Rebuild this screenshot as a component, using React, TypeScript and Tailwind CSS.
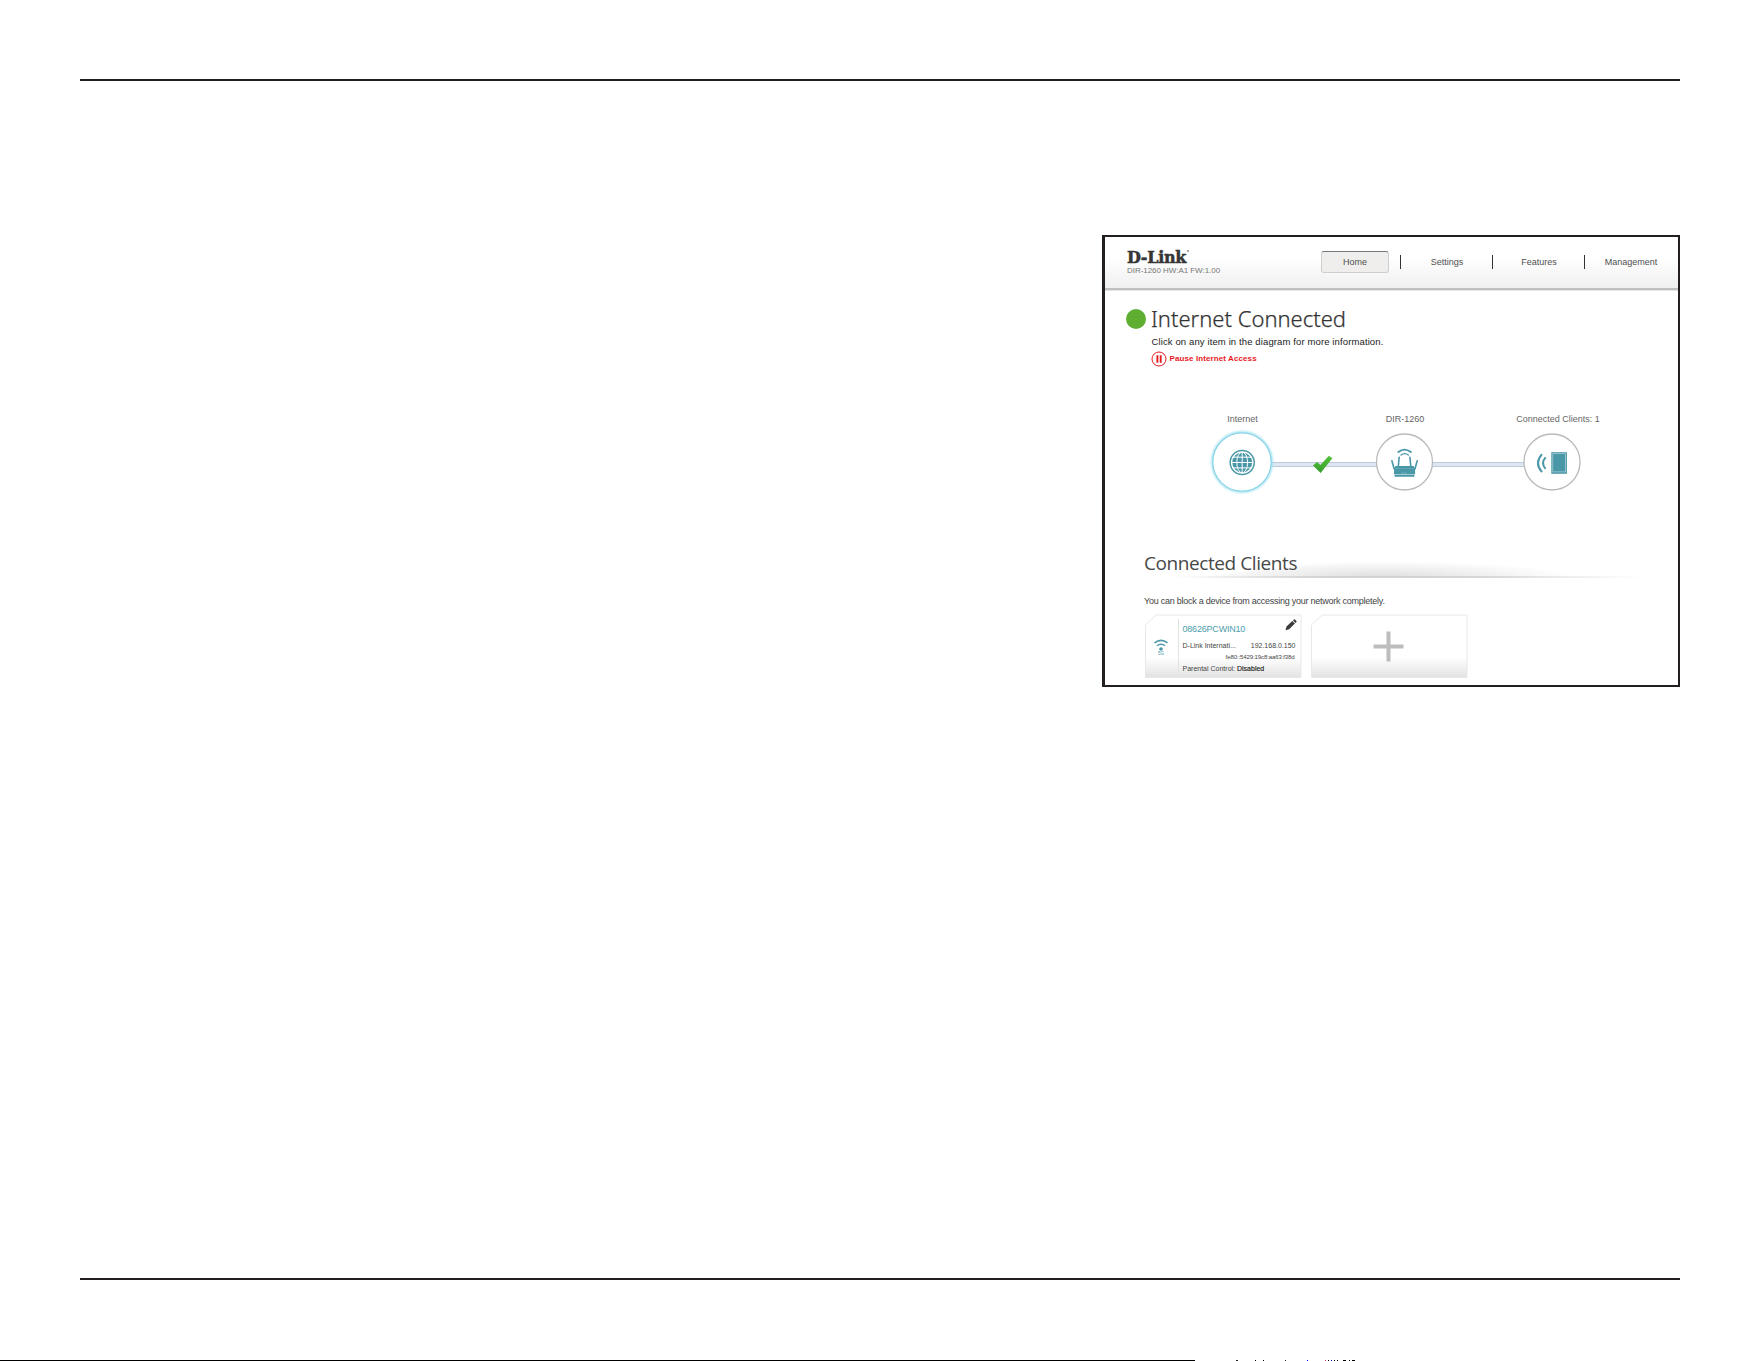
import React from "react";

const TEAL = "#4a97a8";

const Logo: React.FC = () => (
  <div className="pt-[13px] pl-[22px]">
    <div className="flex items-start font-['DejaVu_Serif',serif] text-base leading-4 font-bold tracking-[-0.3px] text-[#353535] [-webkit-text-stroke:0.5px_#353535]">
      D-Link
      <span className="ml-px h-[1.5px] w-[1.5px] rounded-full bg-[#888]" />
    </div>
    <div className="text-[8px] leading-[10px] tracking-[-0.04px] whitespace-nowrap text-[#777]">
      DIR-1260 HW:A1 FW:1.00
    </div>
  </div>
);

const links = ["Settings", "Features", "Management"];

const Nav: React.FC = () => (
  <nav className="mt-3.5 mr-px flex h-[22px] text-[9px] leading-[22px] text-[#505050]">
    <div className="flex w-[92px] justify-center">
      <a className="h-[22px] w-[68px] rounded-[3px] border border-[#cfcfcf] border-t-[#777] bg-[#efeeed] text-center leading-5">
        Home
      </a>
    </div>
    {links.map((link) => (
      <div key={link} className="flex w-[92px] items-center">
        <span className="-ml-px h-3.5 w-px bg-[#333]" />
        <a className="flex-1 text-center">{link}</a>
      </div>
    ))}
  </nav>
);

const Status: React.FC = () => (
  <section className="pt-3 pl-[21px]">
    <div className="flex h-[30px] items-center">
      <span className="mt-0.5 h-5 w-5 rounded-full bg-[#5fae32]" />
      <h1 className="ml-[5px] font-['Noto_Sans',sans-serif] text-[22px] leading-[30px] font-light text-[#333] [-webkit-text-stroke:0.25px_#333]">
        Internet Connected
      </h1>
    </div>
    <p className="mt-[3px] ml-[25.5px] text-[9.5px] leading-3 tracking-[0.12px] text-[#222]">
      Click on any item in the diagram for more information.
    </p>
    <div className="mt-[3px] ml-[25px] flex h-4 items-center text-[#e8191d]">
      <svg width="16" height="16" viewBox="0 0 16 16" fill="none" stroke="currentColor">
        <circle cx="8" cy="8" r="7" strokeWidth="1" />
        <path d="M6.4 4.3v7.4M9.7 4.3v7.4" strokeWidth="1.9" />
      </svg>
      <span className="ml-[2.5px] text-[8px] leading-4 font-bold tracking-[0.1px]">Pause Internet Access</span>
    </div>
  </section>
);

const Diagram: React.FC = () => (
  <section className="relative h-[184px]">
    <svg className="block" width="573" height="184" viewBox="1105 367 573 184">
      <defs>
        <filter id="glow" x="-20%" y="-20%" width="140%" height="140%">
          <feGaussianBlur stdDeviation="1.2" />
        </filter>
        <linearGradient id="check" x1="0" y1="0" x2="0" y2="1">
          <stop offset="0" stopColor="#55c43c" />
          <stop offset="1" stopColor="#359c2b" />
        </linearGradient>
      </defs>
      <rect x="1271" y="462" width="253" height="5" fill="#dfe6f1" />
      <path d="M1271 462.5h253M1271 466.5h253" stroke="#bccadd" />

      <circle cx="1242" cy="462" r="29.5" fill="#fff" stroke="#9be0f0" strokeWidth="2.4" filter="url(#glow)" />
      <circle cx="1242" cy="462" r="29.2" fill="#fff" stroke="#8bd5e6" strokeWidth="1.3" />
      <circle cx="1404.5" cy="462" r="28" fill="#fff" stroke="#bababa" strokeWidth="1.3" />
      <circle cx="1552" cy="462" r="28" fill="#fff" stroke="#bababa" strokeWidth="1.3" />

      {/* globe */}
      <circle cx="1242.2" cy="462.5" r="12" fill="none" stroke={TEAL} strokeWidth="1.5" />
      <circle cx="1242.2" cy="462.5" r="10" fill={TEAL} />
      <g fill="none" stroke="#fff" strokeWidth="1">
        <path d="M1242.2 452v21M1231 462.5h22.4M1232.5 457.2h19.4M1232.5 467.9h19.4" />
        <ellipse cx="1242.2" cy="462.5" rx="5.4" ry="10.4" />
      </g>

      {/* check mark */}
      <path d="M1313 465.5l4-3.6 3.4 3.2 8.4-9.3 3.6 2.4-11.8 14.8z" fill="url(#check)" />

      {/* router */}
      <g fill="none" stroke={TEAL} strokeLinecap="round">
        <path d="M1398.3 452q6.2-4.8 12.6 0" strokeWidth="1.9" />
        <path d="M1401 455q3.6-2.8 7.4 0" strokeWidth="1.3" />
        <path d="M1399.2 457.2l-.9 9M1409.9 457.2l.9 9M1391.9 460.8l2.2 8M1417.2 460.8l-2.2 8" strokeWidth="1.6" />
      </g>
      <path d="M1395.6 466h17.9l1.6 2.6v5.6h-21.1v-5.6zM1394.6 474.8h19.8v1.9h-19.8z" fill={TEAL} />
      <path d="M1395 468.4h19.2" stroke="#7fb5c1" strokeWidth="0.5" />
      <path d="M1401.5 473.2h6" stroke="#d5e8ec" strokeWidth="0.6" strokeDasharray="1 1" />

      {/* wireless client */}
      <rect x="1551.3" y="452.2" width="15.6" height="21.6" fill={TEAL} />
      <rect x="1552.8" y="453.7" width="12.6" height="18.2" fill="none" stroke="#b4d4db" strokeWidth="0.7" />
      <g fill="none" stroke={TEAL} strokeWidth="2">
        <path d="M1542 454.2q-8 9 0 18" />
        <path d="M1545.6 457.3q-5.2 5.8 0 11.6" />
      </g>
    </svg>
    <span className="absolute top-[46px] left-[137.5px] -translate-x-1/2 text-[9px] leading-3 text-[#666]">Internet</span>
    <span className="absolute top-[46px] left-[300px] -translate-x-1/2 text-[9px] leading-3 whitespace-nowrap text-[#666]">
      DIR-1260
    </span>
    <span className="absolute top-[46px] left-[453px] -translate-x-1/2 text-[9px] leading-3 whitespace-nowrap text-[#666]">
      Connected Clients: 1
    </span>
  </section>
);

const CardShape: React.FC = () => (
  <svg className="absolute inset-0" width="157" height="64" viewBox="0 0 157 64">
    <defs>
      <linearGradient id="card" x1="0" y1="0" x2="0" y2="1">
        <stop offset="0.68" stopColor="#fff" />
        <stop offset="1" stopColor="#e3e2e2" />
      </linearGradient>
    </defs>
    <path d="M.5 11L11 1h145v62.5H.5z" fill="url(#card)" stroke="#e9e8e6" strokeWidth="1" />
  </svg>
);

const ClientCard: React.FC = () => (
  <div className="relative h-16 w-[157px]">
    <CardShape />
    <div className="relative flex h-full">
      <div className="flex w-[33px] justify-center pt-[25px]">
        <svg width="14" height="18" viewBox="0 0 14 18" fill="none" stroke={TEAL}>
          <path d="M.5 3.8Q7-1 13.5 3.8" strokeWidth="1.6" />
          <path d="M3 6.8q4-3 8 0" strokeWidth="1.4" />
          <circle cx="7" cy="10" r="1.8" fill={TEAL} stroke="none" />
          <text x="7" y="16.3" textAnchor="middle" fontSize="4.5" fontFamily="Liberation Sans" fill={TEAL} stroke="none">
            5G
          </text>
        </svg>
      </div>
      <div className="mt-[5px] h-14 w-px bg-[#e2e2e2]" />
      <div className="w-[116px] pt-[9px] pl-[3px] text-[7px] leading-[9px] whitespace-nowrap text-[#444]">
        <div className="flex h-3 items-center justify-between pl-px text-[9px] tracking-[-0.2px]">
          <span className="-mt-px leading-3 text-[#4c9dad]">08626PCWIN10</span>
          <svg className="-mt-2 -mr-0.5" width="12" height="12" viewBox="0 0 12 12" fill="#3b3b3b">
            <path d="M.5 11.3l1-3.7L7.3 2l2.6 2.6L4.1 10.3zM8 1.4l.9-.9q.5-.4 1 0L11.4 2q.5.6 0 1.1l-.9.9z" />
          </svg>
        </div>
        <div className="mt-1.5 -mr-px flex justify-between pl-px">
          <span>D-Link Internati...</span>
          <span>192.168.0.150</span>
        </div>
        <div className="mt-[3px] text-right text-[6px] leading-2 tracking-[-0.1px]">fe80::5429:19c8:aa63:f38d</div>
        <div className="mt-[3px] pl-px">
          Parental Control: <span className="text-[#222] [-webkit-text-stroke:0.15px_#222]">Disabled</span>
        </div>
      </div>
    </div>
  </div>
);

const AddCard: React.FC = () => (
  <div className="relative h-16 w-[157px]">
    <CardShape />
    <svg className="relative mt-[17px] ml-[62px] block" width="31" height="31" viewBox="0 0 31 31">
      <path d="M15.5.5v30M.5 15.5h30" stroke="#bdbdbd" strokeWidth="4" />
    </svg>
  </div>
);

const Clients: React.FC = () => (
  <section className="pl-[39px]">
    <div className="relative">
      <svg className="absolute top-2 left-0" width="510" height="19" viewBox="0 0 510 19">
        <defs>
          <radialGradient id="shade" cx="0.5" cy="1" r="1" gradientTransform="translate(0.2 0) scale(0.5 1)">
            <stop offset="0" stopColor="#dfdfdf" />
            <stop offset="1" stopColor="#fff" />
          </radialGradient>
          <linearGradient id="rule">
            <stop offset="0" stopColor="#c4c4c4" stopOpacity="0" />
            <stop offset="0.3" stopColor="#c4c4c4" />
            <stop offset="0.65" stopColor="#c4c4c4" />
            <stop offset="1" stopColor="#c4c4c4" stopOpacity="0" />
          </linearGradient>
        </defs>
        <path d="M60 18C140 8 180 2 260 2s120 6 190 16z" fill="url(#shade)" />
        <rect x="25" y="17.4" width="475" height="1.3" fill="url(#rule)" />
      </svg>
      <h2 className="relative -top-px h-[26px] font-['Open_Sans',sans-serif] text-[19px] leading-[26px] tracking-[-0.42px] text-[#484848]">
        Connected Clients
      </h2>
    </div>
    <p className="mt-[18px] text-[9px] leading-3 tracking-[-0.25px] text-[#444]">
      You can block a device from accessing your network completely.
    </p>
    <div className="mt-[7px] ml-[0.5px] flex gap-[9px]">
      <ClientCard />
      <AddCard />
    </div>
  </section>
);

// leftover marks on the last pixel row: [offset from the previous mark, width, colour]
const marks: [number, number, string][] = [
  [41, 2, "#222"],
  [17, 1, "#000"],
  [7, 1, "#000"],
  [21, 1, "#222"],
  [21, 1, "#00f"],
  [17, 1, "#c36"],
  [2, 1, "#000"],
  [2, 1, "#00a"],
  [2, 1, "#000"],
  [2, 1, "#000"],
  [5, 3, "#000"],
  [3, 1, "#000"],
  [2, 3, "#000"],
];

export default function App() {
  return (
    <div className="flex h-[1361px] w-[1761px] flex-col overflow-hidden bg-white font-['Liberation_Sans',Arial,sans-serif]">
      <main className="mt-[79px] ml-20 flex h-[1201px] w-[1600px] items-start justify-end border-y-2 border-[#231f20]">
        <div className="mt-[154px] h-[452px] w-[578px] overflow-hidden border-2 border-l-[3px] border-[#231f20]">
          <header className="flex h-[53px] justify-between border-b-2 border-[#c0c0c0] bg-linear-to-b from-white from-40% to-[#f0f0f0]">
            <Logo />
            <Nav />
          </header>
          <div className="h-px bg-[#e4e4e4]" />
          <Status />
          <Diagram />
          <Clients />
        </div>
      </main>
      <div className="mt-20 flex h-px">
        <span className="w-[1195px] bg-black" />
        {marks.map(([offset, width, color], i) => (
          <span key={i} style={{ marginLeft: offset, width, backgroundColor: color }} />
        ))}
      </div>
    </div>
  );
}
